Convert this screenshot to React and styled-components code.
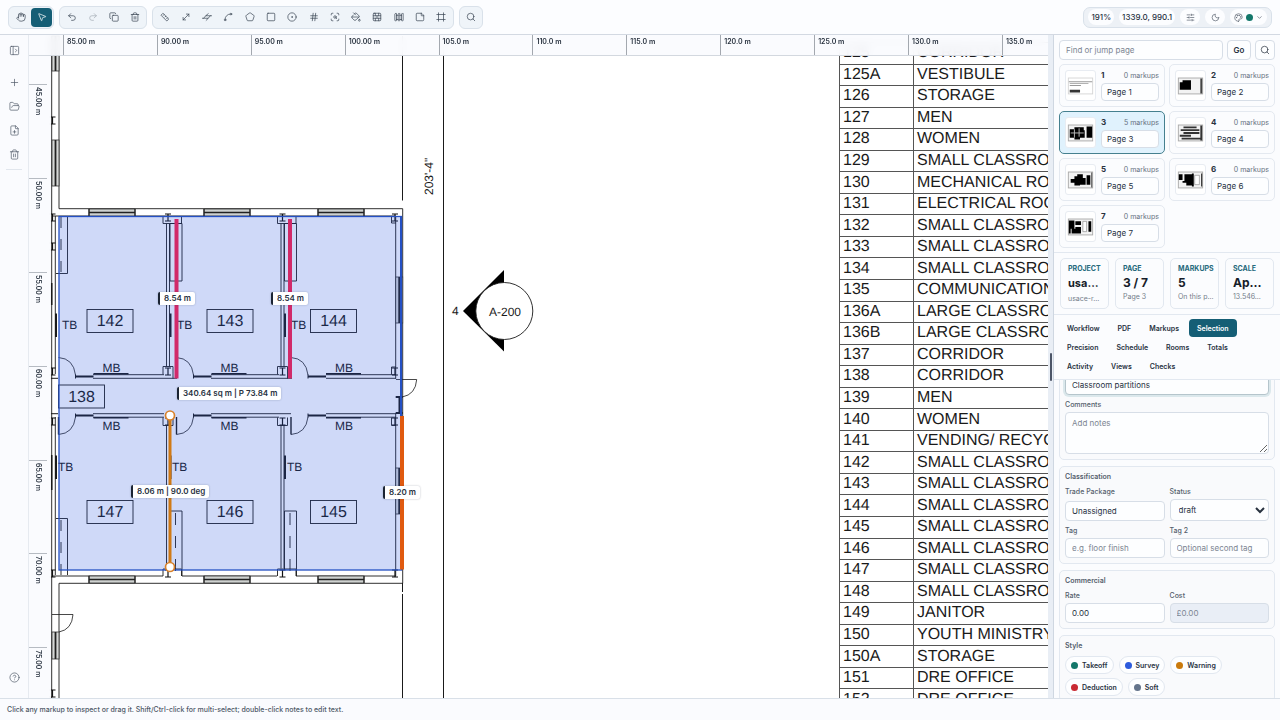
import React, { useLayoutEffect, useRef } from 'react';
import styled, { createGlobalStyle } from 'styled-components';
import {
    Hand, MousePointer2, Undo2, Redo2, Copy, Trash2, MoveDiagonal, Spline, Pentagon, Square,
    CircleDot, Hash, ScanSearch, PaintBucket, BrickWall, Fence, StickyNote, Frame, Search,
    PanelLeftOpen, Plus, FolderOpen, FilePlus, CircleHelp, SlidersHorizontal, Moon, Palette, ChevronDown
} from 'lucide-react';

const PX_PER_M = 18.78;

const topTicks = ['85.00 m', '90.00 m', '95.00 m', '100.00 m', '105.0 m', '110.0 m', '115.0 m', '120.0 m', '125.0 m', '130.0 m', '135.0 m'];
const sideTicks = ['45.00 m', '50.00 m', '55.00 m', '60.00 m', '65.00 m', '70.00 m', '75.00 m'];

const rooms = [
    ['125', 'CORRIDOR'], ['125A', 'VESTIBULE'], ['126', 'STORAGE'], ['127', 'MEN'], ['128', 'WOMEN'],
    ['129', 'SMALL CLASSROOM'], ['130', 'MECHANICAL ROOM'], ['131', 'ELECTRICAL ROOM'],
    ['132', 'SMALL CLASSROOM'], ['133', 'SMALL CLASSROOM'], ['134', 'SMALL CLASSROOM'],
    ['135', 'COMMUNICATIONS'], ['136A', 'LARGE CLASSROOM'], ['136B', 'LARGE CLASSROOM'],
    ['137', 'CORRIDOR'], ['138', 'CORRIDOR'], ['139', 'MEN'], ['140', 'WOMEN'],
    ['141', 'VENDING/ RECYCLING'], ['142', 'SMALL CLASSROOM'], ['143', 'SMALL CLASSROOM'],
    ['144', 'SMALL CLASSROOM'], ['145', 'SMALL CLASSROOM'], ['146', 'SMALL CLASSROOM'],
    ['147', 'SMALL CLASSROOM'], ['148', 'SMALL CLASSROOM'], ['149', 'JANITOR'],
    ['150', 'YOUTH MINISTRY'], ['150A', 'STORAGE'], ['151', 'DRE OFFICE'], ['152', 'DRE OFFICE']
];

const pages = [
    { id: 1, markups: 0 }, { id: 2, markups: 0 }, { id: 3, markups: 5 }, { id: 4, markups: 0 },
    { id: 5, markups: 0 }, { id: 6, markups: 0 }, { id: 7, markups: 0 }
];

const stats = [
    { label: 'Project', value: 'usa…', note: 'usace-r…', small: true },
    { label: 'Page', value: '3 / 7', note: 'Page 3' },
    { label: 'Markups', value: '5', note: 'On this p…' },
    { label: 'Scale', value: 'Ap…', note: '13.546…' }
];

const tabs = ['Workflow', 'PDF', 'Markups', 'Selection', 'Precision', 'Schedule', 'Rooms', 'Totals', 'Activity', 'Views', 'Checks'];

const presets = [
    ['Takeoff', '#13776a'], ['Survey', '#2d5bdc'], ['Warning', '#ca7a0c'], ['Deduction', '#c92a33'], ['Soft', '#64748b']
];

function Calibrate(props) {
    return (
        <svg width={props.size} height={props.size} viewBox="0 0 24 24" fill="none" stroke="currentColor" strokeWidth={props.strokeWidth} strokeLinecap="round" strokeLinejoin="round">
            <path d="M3 7l4-4 14 14-4 4z" />
            <path d="M10 6l-2 2M14 10l-2 2M18 14l-2 2" />
        </svg>
    );
}

function PolyLength(props) {
    return (
        <svg width={props.size} height={props.size} viewBox="0 0 24 24" fill="none" stroke="currentColor" strokeWidth={props.strokeWidth} strokeLinecap="round" strokeLinejoin="round">
            <path d="M1 15h14l-5 5M23 9H9l6-5" />
            <path d="M9 9l-5 6M20 9l-5 6" />
        </svg>
    );
}

function ToolButton(props) {
    const Icon = props.icon;
    return (
        <IconButton type="button" aria-label={props.label} $active={props.active} $faint={props.faint}>
            <Icon size={10} strokeWidth={1.7} />
        </IconButton>
    );
}

const drawTools = [
    [Calibrate, 'Calibrate'], [MoveDiagonal, 'Length'], [PolyLength, 'Polylength'], [Spline, 'Arc'], [Pentagon, 'Area'],
    [Square, 'Rectangle'], [CircleDot, 'Circle'], [Hash, 'Count'], [ScanSearch, 'Find symbol'], [PaintBucket, 'Fill'],
    [BrickWall, 'Wall'], [Fence, 'Partition'], [StickyNote, 'Note'], [Frame, 'Crop']
];

function TopBar() {
    return (
        <Toolbar>
            <ToolGroup $width={46}>
                <ToolButton icon={Hand} label="Pan" />
                <ToolButton icon={MousePointer2} label="Select" active />
            </ToolGroup>
            <ToolGroup $width={88}>
                <ToolButton icon={Undo2} label="Undo" />
                <ToolButton icon={Redo2} label="Redo" faint />
                <ToolButton icon={Copy} label="Duplicate" />
                <ToolButton icon={Trash2} label="Delete" />
            </ToolGroup>
            <ToolGroup $width={302}>
                {drawTools.map(([icon, label]) => <ToolButton key={label} icon={icon} label={label} />)}
            </ToolGroup>
            <ToolGroup $width={24}>
                <ToolButton icon={Search} label="Search" />
            </ToolGroup>
            <Readouts>
                <Pill>191%</Pill>
                <Pill>1339.0, 990.1</Pill>
                <PillButton type="button" aria-label="Settings"><SlidersHorizontal size={9} strokeWidth={1.7} /></PillButton>
                <PillButton type="button" aria-label="Dark mode"><Moon size={9} strokeWidth={1.7} /></PillButton>
                <PillButton type="button" aria-label="Theme">
                    <Palette size={9} strokeWidth={1.7} />
                    <Dot $color="#13776a" />
                    <ChevronDown size={7} strokeWidth={2} />
                </PillButton>
            </Readouts>
        </Toolbar>
    );
}

// window in a horizontal wall
function HWindow({ x, y }) {
    return (
        <g>
            <rect x={x} y={y} width="46" height="7" fill="#cfd2d0" stroke="#333" strokeWidth="0.8" />
            <path d={`M${x} ${y + 3.5}h46`} stroke="#222" strokeWidth="1.4" />
            <path d={`M${x} ${y}v7M${x + 46} ${y}v7`} stroke="#222" strokeWidth="1.2" />
        </g>
    );
}

// window in a vertical wall
function VWindow({ x, y, h }) {
    return (
        <g>
            <rect x={x} y={y} width="7" height={h} fill="#d5d7d6" stroke="#333" strokeWidth="0.8" />
            <path d={`M${x + 3.5} ${y}v${h}`} stroke="#222" strokeWidth="1.8" />
        </g>
    );
}

function Column({ x, y }) {
    return <path d={`M${x - 3} ${y}h6M${x - 3} ${y + 7}h6M${x} ${y}v7`} stroke="#111" strokeWidth="1.2" />;
}

// door, jamb and marker board on both sides of the corridor
function CorridorSet({ x }) {
    return (
        <g>
            <path d={`M${x} 357.5q15 1 17 17.5`} strokeWidth="0.8" />
            <path d={`M${x} 434.5q15-1 17-17.5`} strokeWidth="0.8" />
            <path d={`M${x} 417v17.5`} strokeWidth="1.4" />
            <path d={`M${x + 17} 374.5v4M${x + 17} 413.5v4`} strokeWidth="1" />
            <path d={`M${x + 17} 376.5h18M${x + 17} 415.5h18`} strokeWidth="2" />
            <path d={`M${x + 35} 373.8h35M${x + 35} 417.8h35`} strokeWidth="1.6" />
        </g>
    );
}

function Partition({ x }) {
    return (
        <g strokeWidth="0.9">
            <path d={`M${x} 223.5v143M${x + 3} 223.5v143M${x} 425.5v143M${x + 3} 425.5v143`} />
            <path d={`M${x - 3.5} 216v7.5h18.5v-7.5M${x - 3.5} 374.5v-8h10v12M${x - 3.5} 417.5v8h10v-8M${x - 3.5} 576v-7h18.5v7`} />
            <path d={`M${x + 3.5} 223.5h12v57.5h-12zM${x + 3.5} 570v-59h12v65`} />
            <path d={`M${x + 9} 513v58`} strokeDasharray="12 11" />
            <path d={`M${x + 4} 313.5v23.5M${x + 4} 455.5v23.5`} strokeWidth="2" />
            <Column x={x + 1.5} y={214} />
            <Column x={x + 1.5} y={368} />
            <Column x={x + 1.5} y={418} />
            <Column x={x + 1.5} y={570} />
        </g>
    );
}

function RoomTag({ x, y, children }) {
    return (
        <g>
            <rect x={x} y={y} width="46" height="23" strokeWidth="0.9" />
            <RoomText x={x + 23} y={y + 16.5}>{children}</RoomText>
        </g>
    );
}

function FloorPlan() {
    return (
        <Plan aria-label="Floor plan">
            <g transform="translate(-29 -35)" fill="none" stroke="#1a1a1a">
                <path d="M51.7 36v664M59 36v172.7h343.7V576M59 698V583.3h343.7V576M55.3 216v158M55.3 417v158" strokeWidth="0.9" />
                <path d="M52 216h343.7v162.5M395.7 413.5V576M93 374.7h71M211 374.7h68M326 374.7h70M93 378.3h84M211 378.3h81M326 378.3h70M93 413.7h71M211 413.7h80M326 413.7h70M93 417.2h71M211 417.2h68M326 417.2h70M52 576h111M182 576h95M296 576h100" strokeWidth="0.9" />
                <path d="M50 378.3h8M50 413.7h8" strokeWidth="1" />
                {[89, 204, 318].map(x => <HWindow key={x} x={x} y={209} />)}
                {[89, 204, 318].map(x => <HWindow key={x} x={x} y={576} />)}
                <VWindow x={52} y={36} h={35} />
                <VWindow x={52} y={140} h={46} />
                <VWindow x={52} y={632} h={27} />
                <VWindow x={395.7} y={277} h={46} />
                <VWindow x={395.7} y={468} h={46} />
                <path d="M399.5 397v16M395.7 397h7M395.7 413h7" strokeWidth="2" />
                <path d="M396 379.5h20.7q-1 15-14.5 17.5M52 614.5h21q-1 15-14 17.5" strokeWidth="0.8" />
                {[117, 214, 243, 368, 418, 570, 690].map(y => <Column key={y} x={52.5} y={y} />)}
                {[214, 368, 418, 570].map(y => <Column key={y} x={395} y={y} />)}
                <path d="M391.5 216v7h4.5M391.5 374.5v-7.5h4.5M391.5 417.5v8h4.5" strokeWidth="0.9" />
                <path d="M56 273.5h11.5V216M56 518.5h11.5V575" strokeWidth="0.9" />
                <path d="M61 217v56M61 520v55" strokeWidth="0.9" strokeDasharray="11 11" />
                <path d="M56 313.5v23.5M56 455.5v23.5" strokeWidth="2" />
                <path d="M51.5 283v22M51.5 455v35" strokeWidth="2" />
                <Partition x={166.5} />
                <Partition x={281} />
                <CorridorSet x={58.5} />
                <CorridorSet x={176.5} />
                <CorridorSet x={291} />
                <path d="M402.5 36v164.5M402.5 583v9M402.5 594v104M443.5 36v664" strokeWidth="1" />

                <RoomTag x={87} y={309.5}>142</RoomTag>
                <RoomTag x={207} y={309.5}>143</RoomTag>
                <RoomTag x={310.5} y={309.5}>144</RoomTag>
                <RoomTag x={58.5} y={385}>138</RoomTag>
                <RoomTag x={87} y={500.5}>147</RoomTag>
                <RoomTag x={207} y={500.5}>146</RoomTag>
                <RoomTag x={310.5} y={500.5}>145</RoomTag>
                {[62, 177, 291].map(x => <PlanText key={x} x={x} y="329">TB</PlanText>)}
                {[58, 172, 287].map(x => <PlanText key={x} x={x} y="471">TB</PlanText>)}
                {[102.5, 220.5, 335].map(x => <PlanText key={x} x={x} y="371.5">MB</PlanText>)}
                {[102.5, 220.5, 335].map(x => <PlanText key={x} x={x} y="429.5">MB</PlanText>)}
                <PlanText transform="translate(433 195) rotate(-90)">203'-4"</PlanText>

                <path d="M463 311l41-41v81.5z" fill="#000" stroke="none" />
                <circle cx="504.3" cy="311" r="28.5" fill="#fff" strokeWidth="0.9" />
                <PlanText x="452" y="315">4</PlanText>
                <PlanText x="489" y="315.5">A-200</PlanText>

                <rect x="59" y="216.5" width="342.5" height="353.5" fill="#2554e1" fillOpacity="0.22" stroke="#2450c4" strokeWidth="1.3" />
                <path d="M401 217v199" stroke="#2450c4" strokeWidth="2" />
                <path d="M176.5 219v159.5M290 219v159.5" stroke="#d12a6a" strokeWidth="4" />
                <path d="M402 416v153.5" stroke="#e05a10" strokeWidth="4" />
                <path d="M170 416v151" stroke="#d07a16" strokeWidth="3" />
                <circle cx="170" cy="415.5" r="4.5" fill="#fff" stroke="#d9822b" strokeWidth="1.7" />
                <circle cx="170" cy="567" r="4.5" fill="#fff" stroke="#d9822b" strokeWidth="1.7" />
            </g>
        </Plan>
    );
}

function Thumb({ id }) {
    const art = {
        1: <g fill="#999"><path d="M3 11h25v1H3zM4 13h20v1H4zM4 15h12v1H4z" /><path fill="#333" d="M4 20h11v3H4z" /></g>,
        2: <g><path d="M4 12h3v-2h9v10H4z" /><path d="M26 8h2v16h-2z" fill="#444" /></g>,
        3: <g><path d="M4 12h5v-2h10v3h1v8h-5v2H9v-2H4zM22 9h6v12h-6z" /><path d="M5 16h14M9 12v9M14 11v9" stroke="#bbb" /></g>,
        4: <g fill="#333"><path d="M8 9h14v2H8zM5 12h20v2H5zM8 15h17v2H8zM4 18h12v2H4zM6 21h20v2H6zM26 8h2v16h-2z" /></g>,
        5: <g><path d="M5 15h4v-3h3v-2h6v4h3v7h-6v1H9v-3H5zM22 11h4v10h-4z" /><path d="M27 8h1v16h-1z" fill="#444" /></g>,
        6: <g><path d="M3 10h4v6H3zM9 10h8v12h-6v-3H7v-2h2zM17 9h2v14h-2zM27 9h1v14h-1z" /><path d="M20 11h5v10h-5z" fill="#fff" stroke="#777" strokeWidth="0.6" /></g>,
        7: <g><path d="M3 9h6v9H5v5H3zM6 18h4v5H6zM10 10h6v4h-6zM10 16h6v7h-6zM24 10h3v11h-3z" /><path d="M18 10h4v11h-4z" fill="#fff" stroke="#777" strokeWidth="0.6" /></g>
    };
    return (
        <ThumbBox viewBox="0 0 31 31">
            <rect x="2.5" y="7.5" width="26" height="17" fill={id === 1 ? '#fff' : '#f3f3f3'} stroke={id === 1 ? '#d5d5d5' : '#aaa'} />
            {art[id]}
        </ThumbBox>
    );
}

function Field(props) {
    return (
        <FieldBox>
            <FieldLabel htmlFor={props.id}>{props.label}</FieldLabel>
            {props.children}
        </FieldBox>
    );
}

function Inspector() {
    const body = useRef(null);

    useLayoutEffect(() => {
        body.current.scrollTop = 44;
    }, []);

    return (
        <InspectorBody ref={body}>
            <Card>
                <CardTitle>Details</CardTitle>
                <Field id="name" label="Name"><TextInput id="name" defaultValue="Classroom partitions" $focused /></Field>
                <Field id="comments" label="Comments"><Notes id="comments" placeholder="Add notes" /></Field>
            </Card>
            <Card>
                <CardTitle>Classification</CardTitle>
                <FieldRow>
                    <Field id="trade" label="Trade Package"><TextInput id="trade" defaultValue="Unassigned" /></Field>
                    <Field id="status" label="Status">
                        <Select id="status" defaultValue="draft"><option>draft</option><option>final</option></Select>
                    </Field>
                    <Field id="tag" label="Tag"><TextInput id="tag" placeholder="e.g. floor finish" /></Field>
                    <Field id="tag2" label="Tag 2"><TextInput id="tag2" placeholder="Optional second tag" /></Field>
                </FieldRow>
            </Card>
            <Card>
                <CardTitle>Commercial</CardTitle>
                <FieldRow>
                    <Field id="rate" label="Rate"><TextInput id="rate" defaultValue="0.00" /></Field>
                    <Field id="cost" label="Cost"><TextInput id="cost" defaultValue="£0.00" disabled /></Field>
                </FieldRow>
            </Card>
            <Card>
                <CardTitle>Style</CardTitle>
                <Chips>
                    {presets.map(([name, color]) => (
                        <Chip type="button" key={name}><Dot $color={color} />{name}</Chip>
                    ))}
                </Chips>
            </Card>
        </InspectorBody>
    );
}

function SidePanel() {
    return (
        <Panel>
            <PageSection>
                <SearchRow>
                    <TextInput aria-label="Find or jump page" placeholder="Find or jump page" />
                    <SmallButton type="button">Go</SmallButton>
                    <SmallButton type="button" aria-label="Search pages"><Search size={10} strokeWidth={1.7} /></SmallButton>
                </SearchRow>
                <PageGrid>
                    {pages.map(page => (
                        <PageCard key={page.id} $active={page.id === 3}>
                            <Thumb id={page.id} />
                            <PageInfo>
                                <PageHead><b>{page.id}</b><span>{page.markups} markups</span></PageHead>
                                <PageName aria-label={'Name of page ' + page.id} defaultValue={'Page ' + page.id} />
                            </PageInfo>
                        </PageCard>
                    ))}
                </PageGrid>
            </PageSection>
            <Stats>
                {stats.map(stat => (
                    <Stat key={stat.label}>
                        <StatLabel>{stat.label}</StatLabel>
                        <StatValue $small={stat.small}>{stat.value}</StatValue>
                        <StatNote>{stat.note}</StatNote>
                    </Stat>
                ))}
            </Stats>
            <Tabs>
                {tabs.map(tab => <Tab type="button" key={tab} $active={tab === 'Selection'}>{tab}</Tab>)}
            </Tabs>
            <Inspector />
        </Panel>
    );
}

function App() {
    const step = 5 * PX_PER_M;
    return (
        <Page>
            <GlobalStyle />
            <TopBar />
            <Workspace>
                <Rail>
                    <RailButton type="button" aria-label="Open panel"><PanelLeftOpen size={11} strokeWidth={1.5} /></RailButton>
                    <RailTools>
                        <RailButton type="button" aria-label="New"><Plus size={11} strokeWidth={1.5} /></RailButton>
                        <RailButton type="button" aria-label="Open"><FolderOpen size={11} strokeWidth={1.5} /></RailButton>
                        <RailButton type="button" aria-label="Add file"><FilePlus size={11} strokeWidth={1.5} /></RailButton>
                        <RailButton type="button" aria-label="Remove"><Trash2 size={11} strokeWidth={1.5} /></RailButton>
                    </RailTools>
                    <RailButton type="button" aria-label="Help"><CircleHelp size={11} strokeWidth={1.5} /></RailButton>
                </Rail>
                <Canvas>
                    <FloorPlan />
                    <RoomTable>
                        <tbody>
                            {rooms.map(([number, name]) => (
                                <tr key={number}><td>{number}</td><td>{name}</td></tr>
                            ))}
                        </tbody>
                    </RoomTable>
                    <Measure $x={129} $y={257}>8.54 m</Measure>
                    <Measure $x={242} $y={257}>8.54 m</Measure>
                    <Measure $x={148} $y={352}>340.64 sq m | P 73.84 m</Measure>
                    <Measure $x={102} $y={450}>8.06 m | 90.0 deg</Measure>
                    <Measure $x={354} $y={451}>8.20 m</Measure>
                    <SideRuler>
                        {sideTicks.map(t => <SideTick key={t} style={{ height: step }}>{t}</SideTick>)}
                    </SideRuler>
                    <TopRuler>
                        {topTicks.map(t => <TopTick key={t} style={{ width: step }}>{t}</TopTick>)}
                    </TopRuler>
                </Canvas>
                <Splitter />
                <SidePanel />
            </Workspace>
            <StatusBar>Click any markup to inspect or drag it. Shift/Ctrl-click for multi-select; double-click notes to edit text.</StatusBar>
        </Page>
    );
}

const GlobalStyle = createGlobalStyle`
    * {
        box-sizing: border-box;
    }
    body {
        margin: 0;
        font-family: Inter, "Liberation Sans", sans-serif;
        font-size: 8px;
        color: #28323f;
        background: #fafbfe;
    }
    button, input, textarea, select {
        font: inherit;
        color: inherit;
        margin: 0;
    }
`;

const Page = styled.div`
    display: flex;
    flex-direction: column;
    height: 100vh;
    overflow: hidden;
`;

const Toolbar = styled.header`
    display: flex;
    align-items: center;
    gap: 5px;
    height: 35px;
    padding: 0 8px;
    background: #fcfdff;
    border-bottom: 1px solid #d3d9e2;
`;

const ToolGroup = styled.div`
    display: flex;
    width: ${props => props.$width}px;
    height: 23px;
    padding: 1px;
    background: #eff4f9;
    border: 1px solid #d9e1ea;
    border-radius: 6px;
`;

const IconButton = styled.button`
    flex: 1;
    display: flex;
    align-items: center;
    justify-content: center;
    padding: 0;
    border: 0;
    border-radius: 4px;
    background: ${props => props.$active ? '#155e75' : 'transparent'};
    color: ${props => props.$active ? '#fff' : '#3a4654'};
    opacity: ${props => props.$faint ? 0.4 : 1};
`;

const Readouts = styled.div`
    display: flex;
    align-items: center;
    gap: 5px;
    height: 21px;
    margin-left: auto;
    padding: 0 4px;
    background: #edf1f6;
    border: 1px solid #d9e1ea;
    border-radius: 7px;
`;

const Pill = styled.span`
    padding: 0 3px;
    line-height: 16px;
    font-weight: 500;
    background: #fcfdff;
    border-radius: 8px;
`;

const PillButton = styled.button`
    display: flex;
    align-items: center;
    justify-content: center;
    gap: 3px;
    min-width: 20px;
    height: 16px;
    padding: 0 4px;
    border: 0;
    border-radius: 8px;
    background: #fcfdff;
    color: #4b5563;
`;

const Dot = styled.span`
    width: 7px;
    height: 7px;
    border-radius: 50%;
    background: ${props => props.$color};
`;

const Workspace = styled.div`
    flex: 1;
    display: flex;
    min-height: 0;
`;

const Rail = styled.nav`
    display: flex;
    flex-direction: column;
    align-items: center;
    width: 29px;
    padding: 5px 0 11px;
    border-right: 1px solid #e6eaf0;

    > :last-child {
        margin-top: auto;
    }
`;

const RailTools = styled.div`
    display: flex;
    flex-direction: column;
    gap: 4px;
    margin-top: 12px;
    padding-bottom: 5px;
    border-bottom: 1px solid #e1e6ed;
`;

const RailButton = styled.button`
    display: flex;
    align-items: center;
    justify-content: center;
    width: 16px;
    height: 20px;
    padding: 0;
    border: 0;
    background: none;
    color: #4d5866;
`;

const Canvas = styled.main`
    flex: 1;
    position: relative;
    min-width: 0;
    overflow: hidden;
    background: #fff;
`;

const Plan = styled.svg`
    display: block;
    width: 100%;
    height: 100%;
`;

const PlanText = styled.text`
    font-family: "Liberation Sans", Arial, sans-serif;
    font-size: 12px;
    fill: #1a1a1a;
    stroke: none;
    text-rendering: geometricPrecision;
`;

const RoomText = styled(PlanText)`
    font-size: 16px;
    text-anchor: middle;
`;

const RoomTable = styled.table`
    position: absolute;
    left: 810px;
    top: 7px;
    width: calc(100% - 809px);
    height: 669px;
    border-collapse: collapse;
    table-layout: fixed;
    font-family: "Liberation Sans", Arial, sans-serif;
    font-size: 16px;
    line-height: 16px;
    color: #1a1a1a;
    text-rendering: geometricPrecision;

    td {
        padding: 0 0 0 3px;
        border: 1px solid #555;
        white-space: nowrap;
        overflow: hidden;
    }
    td:first-child {
        width: 74px;
    }
`;

const Measure = styled.div`
    position: absolute;
    left: ${props => props.$x}px;
    top: ${props => props.$y}px;
    padding: 0 4px;
    border-left: 2px solid #1b2433;
    border-radius: 2px;
    background: #fff;
    box-shadow: 0 0 2px rgba(20, 30, 60, 0.3);
    font-weight: 600;
    line-height: 13px;
    white-space: nowrap;
`;

const TopRuler = styled.div`
    position: absolute;
    inset: 0 0 auto 0;
    display: flex;
    height: 21px;
    padding-left: 34px;
    background: rgba(250, 251, 254, 0.92);
    border-bottom: 1px solid #d3d8df;
    backdrop-filter: blur(4px);
    overflow: hidden;
`;

const TopTick = styled.div`
    flex: none;
    padding: 2px 3px;
    border-left: 1px solid #a3a8af;
    font-size: 7px;
    font-weight: 600;
    line-height: 10px;
`;

const SideRuler = styled.div`
    position: absolute;
    inset: 0 auto 0 0;
    width: 22px;
    padding-top: 49px;
    background: rgba(250, 251, 254, 0.92);
    backdrop-filter: blur(4px);
    overflow: hidden;
`;

const SideTick = styled.div`
    display: flex;
    align-items: flex-end;
    padding: 2px 4px;
    border-top: 1px solid #b6bbc2;
    font-size: 7px;
    font-weight: 600;
    line-height: 10px;
    writing-mode: vertical-rl;
`;

const Splitter = styled.div`
    display: flex;
    align-items: center;
    justify-content: center;
    width: 6px;
    background: #e9eef5;
    border-right: 1px solid #cfd7e1;

    &::after {
        content: "";
        width: 2px;
        height: 28px;
        border-radius: 1px;
        background: #4c5567;
    }
`;

const Panel = styled.aside`
    display: flex;
    flex-direction: column;
    width: 226px;
    background: #fbfcfe;
`;

const PageSection = styled.section`
    padding: 5px 5px 4px;
    border-bottom: 1px solid #e2e8f0;
`;

const SearchRow = styled.div`
    display: grid;
    grid-template-columns: 1fr 24px 20px;
    gap: 4px;
    margin-bottom: 4px;
`;

const TextInput = styled.input`
    width: 100%;
    min-width: 0;
    height: 20px;
    padding: 0 6px;
    border: 1px solid ${props => props.$focused ? '#b5c5cc' : '#d7dee7'};
    border-radius: 4px;
    background: #fdfeff;
    box-shadow: ${props => props.$focused ? '0 0 0 2px #dbe8ec' : 'none'};

    &::placeholder {
        color: #7c8592;
    }
    &:disabled {
        background: #e9eef6;
        color: #7c8592;
    }
`;

const SmallButton = styled.button`
    display: flex;
    align-items: center;
    justify-content: center;
    padding: 0;
    border: 1px solid #d7dee7;
    border-radius: 4px;
    background: #fdfeff;
    font-weight: 600;
`;

const PageGrid = styled.div`
    display: grid;
    grid-template-columns: 1fr 1fr;
    gap: 4px;
`;

const PageCard = styled.div`
    display: flex;
    gap: 5px;
    height: 43px;
    padding: 5px;
    border: 1px solid ${props => props.$active ? '#45808f' : '#e4e9f0'};
    border-radius: 5px;
    background: ${props => props.$active ? '#e0f2fd' : '#fbfcfe'};
`;

const ThumbBox = styled.svg`
    flex: none;
    width: 31px;
    height: 31px;
    border: 1px solid #e8ecf2;
    border-radius: 3px;
    background: #fff;
`;

const PageInfo = styled.div`
    flex: 1;
    min-width: 0;
`;

const PageHead = styled.div`
    display: flex;
    justify-content: space-between;
    font-size: 7px;
    line-height: 11px;

    b {
        font-size: 8px;
    }
    span {
        color: #667080;
    }
`;

const PageName = styled(TextInput)`
    height: 18px;
    margin-top: 2px;
    padding: 0 5px;
`;

const Stats = styled.section`
    display: flex;
    gap: 6px;
    padding: 5px 6px;
    border-bottom: 1px solid #e2e8f0;
    overflow: hidden;
`;

const Stat = styled.div`
    flex: none;
    width: 49px;
    height: 51px;
    padding: 6px 4px 4px 7px;
    border: 1px solid #e2e8f0;
    border-radius: 5px;
    white-space: nowrap;
`;

const StatLabel = styled.div`
    font-size: 7px;
    font-weight: 700;
    line-height: 8px;
    text-transform: uppercase;
    color: #25697c;
`;

const StatValue = styled.div`
    font-size: ${props => props.$small ? 11 : 12}px;
    font-weight: 700;
    line-height: ${props => props.$small ? 21 : 19}px;
    color: #161d29;
`;

const StatNote = styled.div`
    font-size: 7px;
    line-height: 9px;
    color: #737c8a;
`;

const Tabs = styled.nav`
    display: flex;
    flex-wrap: wrap;
    gap: 1px 2px;
    padding: 4px 5px;
    border-bottom: 1px solid #e2e8f0;
`;

const Tab = styled.button`
    height: 18px;
    padding: 0 8px;
    border: 0;
    border-radius: 4px;
    font-size: 7px;
    font-weight: 600;
    background: ${props => props.$active ? '#155e75' : 'transparent'};
    color: ${props => props.$active ? '#fff' : '#28323f'};
`;

const InspectorBody = styled.div`
    flex: 1;
    min-height: 0;
    padding: 6px 5px 12px;
    overflow-y: auto;
    scrollbar-width: none;
`;

const Card = styled.section`
    display: flex;
    flex-direction: column;
    gap: 5px;
    margin-bottom: 6px;
    padding: 5px;
    border: 1px solid #e2e8f0;
    border-radius: 5px;
    background: #f9fafc;
`;

const CardTitle = styled.h3`
    margin: 0;
    font-size: 7px;
    font-weight: 600;
    line-height: 10px;
    color: #555f6d;
`;

const FieldRow = styled.div`
    display: grid;
    grid-template-columns: 1fr 1fr;
    gap: 5px;
`;

const FieldBox = styled.div`
    display: flex;
    flex-direction: column;
    justify-content: space-between;
    gap: 2px;
    min-width: 0;
`;

const FieldLabel = styled.label`
    font-size: 7px;
    font-weight: 500;
    line-height: 10px;
    color: #555f6d;
`;

const Notes = styled.textarea`
    display: block;
    width: 100%;
    height: 42px;
    padding: 5px 6px;
    border: 1px solid #d7dee7;
    border-radius: 4px;
    background: #fdfeff;
    resize: vertical;

    &::placeholder {
        color: #7c8592;
    }
`;

const Select = styled.select`
    width: 100%;
    height: 22px;
    padding: 0 4px;
    border: 1px solid #d7dee7;
    border-radius: 4px;
    background: #fdfeff;
`;

const Chips = styled.div`
    display: flex;
    flex-wrap: wrap;
    gap: 4px 5px;
`;

const Chip = styled.button`
    display: flex;
    align-items: center;
    gap: 4px;
    height: 18px;
    padding: 0 5px;
    border: 1px solid #e2e8f0;
    border-radius: 9px;
    background: #fdfeff;
    font-size: 7px;
    font-weight: 600;
`;

const StatusBar = styled.footer`
    height: 22px;
    padding: 0 7px;
    border-top: 1px solid #d9e0e8;
    background: #fafbfe;
    font-size: 7px;
    font-weight: 500;
    line-height: 21px;
    color: #4d5866;
`;

export default App;
